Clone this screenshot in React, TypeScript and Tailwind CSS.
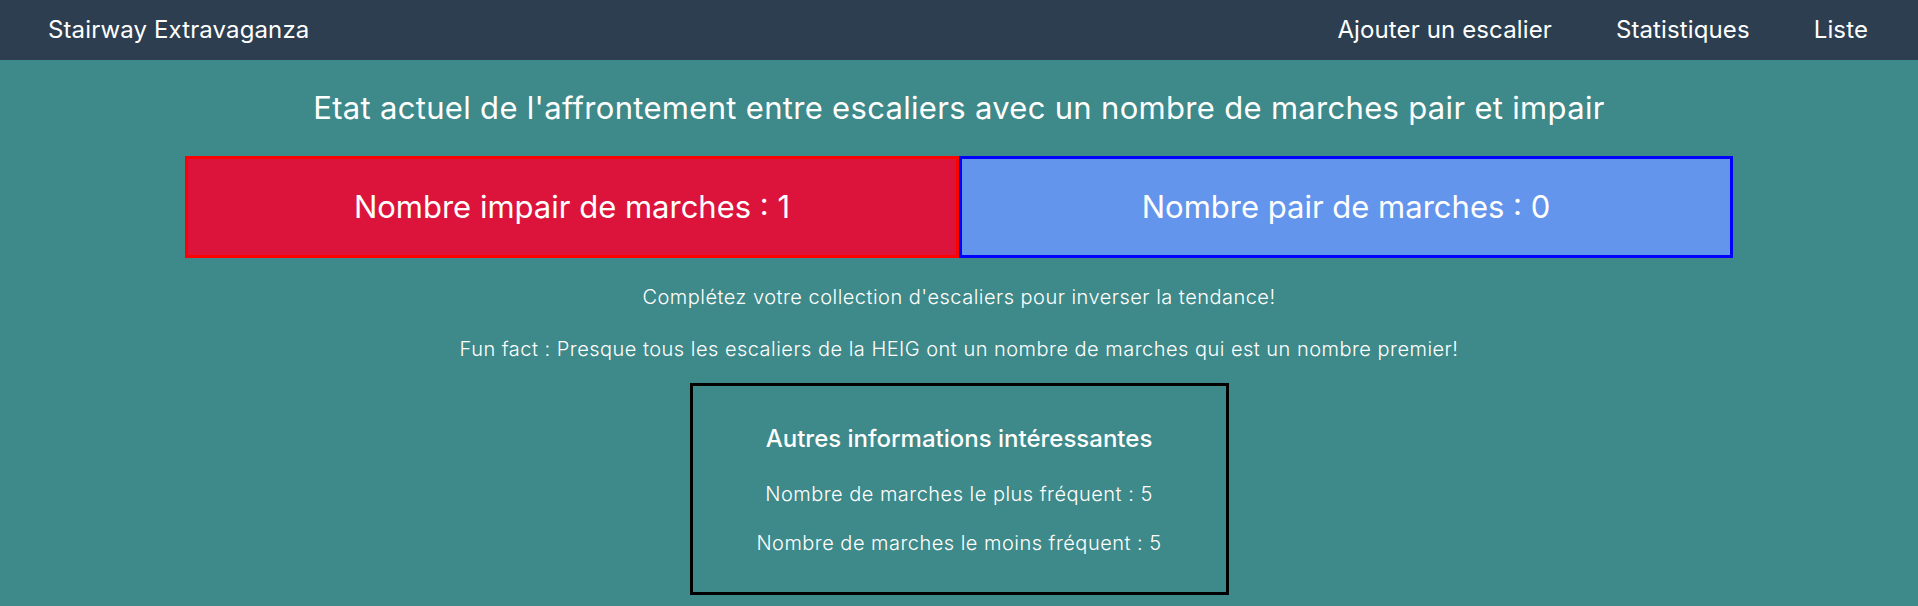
import React from 'react';

const navLinks = ['Ajouter un escalier', 'Statistiques', 'Liste'];

const App = () => {
    const impair = 1;
    const pair = 0;

    return (
        <div className="min-h-[606px] bg-[#3e8989] text-white font-['Inter',sans-serif]">
            {/* Navbar */}
            <nav className="h-[60px] bg-[#2c3e50] flex items-center justify-between pl-[48px] pr-[50px]">
                <span className="text-[24px] font-normal tracking-[0.005em]">Stairway Extravaganza</span>
                <div className="flex items-center gap-[64px]">
                    {navLinks.map(link => (
                        <a key={link} className="text-[24px] font-normal tracking-[0.005em] cursor-pointer">{link}</a>
                    ))}
                </div>
            </nav>

            <main className="flex flex-col items-center">
                <h2 className="mt-[28px] text-[31px] font-normal leading-[40px] tracking-[0.01em]">
                    Etat actuel de l'affrontement entre escaliers avec un nombre de marches pair et impair
                </h2>

                <div className="mt-[28px] flex">
                    <div className="w-[774px] h-[102px] bg-[#dc143c] border-[3px] border-[#ff0000] flex items-center justify-center">
                        <span className="text-[31px]">Nombre impair de marches : {impair}</span>
                    </div>
                    <div className="w-[774px] h-[102px] bg-[#6495ed] border-[3px] border-[#0000ff] flex items-center justify-center">
                        <span className="text-[31px]">Nombre pair de marches : {pair}</span>
                    </div>
                </div>

                <p className="mt-[27px] text-[20px] font-light leading-[24px] tracking-[0.024em]">
                    Complétez votre collection d'escaliers pour inverser la tendance!
                </p>
                <p className="mt-[28px] text-[20px] font-light leading-[24px] tracking-[0.024em]">
                    Fun fact : Presque tous les escaliers de la HEIG ont un nombre de marches qui est un nombre premier!
                </p>

                <div className="mt-[22px] w-[539px] h-[212px] border-[3px] border-black flex flex-col items-center pt-[38px]">
                    <h3 className="text-[24px] font-medium leading-[30px]">Autres informations intéressantes</h3>
                    <p className="mt-[28px] text-[20px] font-light leading-[24px] tracking-[0.024em]">Nombre de marches le plus fréquent : 5</p>
                    <p className="mt-[25px] text-[20px] font-light leading-[24px] tracking-[0.024em]">Nombre de marches le moins fréquent : 5</p>
                </div>
            </main>
        </div>
    );
};

export default App;
